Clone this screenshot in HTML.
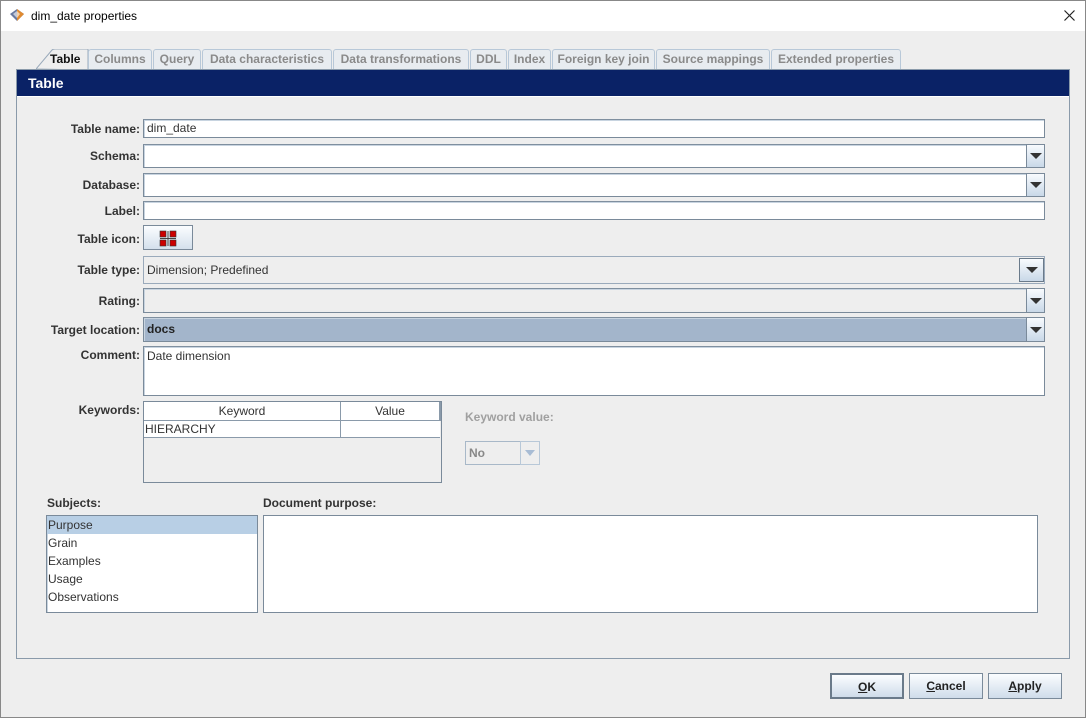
<!DOCTYPE html>
<html><head><meta charset="utf-8"><style>
*{box-sizing:border-box;margin:0;padding:0}
body{width:1086px;height:718px;background:#eeeeee;font-family:"Liberation Sans",Arial,sans-serif;font-size:12px;color:#333;position:relative;overflow:hidden}
.a{position:absolute}
.win{left:0;top:0;width:1086px;height:718px;border:1px solid #888}
.title{left:1px;top:1px;width:1084px;height:30px;background:#fff}
.tab{position:absolute;top:49px;height:20px;border:1px solid #b8c8d8;border-bottom:none;background:#e8ecf0;color:#8a8a8a;font-weight:bold;text-align:center;line-height:18px;border-radius:3px 3px 0 0}
.lbl{position:absolute;right:946px;font-weight:bold;color:#333;text-align:right;white-space:nowrap}
.inp{position:absolute;left:143px;width:902px;background:#fff;border:1px solid #7a8a9a;border-top-color:#7f8f9f;box-shadow:inset 1px 1px 0 #c8d4e0;padding-left:3px;white-space:nowrap}
.btn{position:absolute;background:linear-gradient(#f8fbfe,#c9d8e8);border:1px solid #7a8a9a}
.arr{position:absolute;left:50%;top:50%;margin-left:-6px;margin-top:-3px;width:0;height:0;border-left:6px solid transparent;border-right:6px solid transparent;border-top:6px solid #333}
.pb{position:absolute;top:673px;height:26px;width:74px;background:linear-gradient(#fbfdff,#cfdcea);border:1px solid #7a8a9a;font-weight:bold;font-size:12px;text-align:center;line-height:24px;color:#222}
</style></head><body>
<div class="a win"></div>
<div class="a title"></div>
<svg class="a" style="left:9px;top:8px" width="16" height="14" viewBox="0 0 16 14"><path d="M1 6 L8 1 L15 6 L8 13 Z" fill="#6a7aa0"/><path d="M8 1 L15 6 L8 13 Z" fill="#e08a30"/><path d="M4 6 L8 3 L11 6 L8 10Z" fill="#fff" opacity=".6"/></svg>
<div class="a" style="left:31px;top:9px;font-size:12px;color:#000">dim_date properties</div>
<svg class="a" style="left:1064px;top:10px" width="11" height="11"><path d="M0.5 0.5L10.5 10.5M10.5 0.5L0.5 10.5" stroke="#222" stroke-width="1.2"/></svg>

<svg class="a" style="left:36px;top:49px" width="54" height="21"><path d="M0 20 L16 1 Q17 0 19 0 L52 0 L52 21 Z" fill="#eeeeee" stroke="#9aaabb"/></svg>
<div class="a" style="left:50px;top:52px;font-weight:bold;color:#111">Table</div>
<div class="tab" style="left:88px;width:64px">Columns</div>
<div class="tab" style="left:153px;width:48px">Query</div>
<div class="tab" style="left:202px;width:130px">Data characteristics</div>
<div class="tab" style="left:333px;width:136px">Data transformations</div>
<div class="tab" style="left:470px;width:37px">DDL</div>
<div class="tab" style="left:508px;width:43px">Index</div>
<div class="tab" style="left:552px;width:103px">Foreign key join</div>
<div class="tab" style="left:656px;width:114px">Source mappings</div>
<div class="tab" style="left:771px;width:130px">Extended properties</div>

<div class="a" style="left:16px;top:69px;width:1054px;height:590px;border:1px solid #8a9aaa;background:#eeeeee"></div>
<div class="a" style="left:17px;top:70px;width:1052px;height:26px;background:#0a2266;color:#fff;font-weight:bold;font-size:14px;line-height:26px;padding-left:11px">Table</div>
<div class="a" style="left:17px;top:96px;width:1052px;height:1px;background:#fff"></div>

<div class="lbl" style="top:122px">Table name:</div>
<div class="inp" style="top:119px;height:19px;line-height:17px">dim_date</div>

<div class="lbl" style="top:149px">Schema:</div>
<div class="inp" style="top:144px;height:24px;width:884px"></div>
<div class="btn" style="left:1026px;top:144px;width:19px;height:24px"><div class="arr"></div></div>

<div class="lbl" style="top:178px">Database:</div>
<div class="inp" style="top:173px;height:24px;width:884px"></div>
<div class="btn" style="left:1026px;top:173px;width:19px;height:24px"><div class="arr"></div></div>

<div class="lbl" style="top:204px">Label:</div>
<div class="inp" style="top:201px;height:19px"></div>

<div class="lbl" style="top:232px">Table icon:</div>
<div class="btn" style="left:143px;top:225px;width:50px;height:25px;background:linear-gradient(#fbfdff,#d4e0ec)">
<svg class="a" style="left:15px;top:4px" width="18" height="17"><rect x="1" y="1" width="6" height="6" fill="#c00" stroke="#333" stroke-width=".6"/><rect x="11" y="1" width="6" height="6" fill="#c00" stroke="#333" stroke-width=".6"/><rect x="1" y="10" width="6" height="6" fill="#c00" stroke="#333" stroke-width=".6"/><rect x="11" y="10" width="6" height="6" fill="#c00" stroke="#333" stroke-width=".6"/><path d="M9 1V16M1 8.5H17" stroke="#444"/></svg></div>

<div class="lbl" style="top:263px">Table type:</div>
<div class="inp" style="top:256px;height:28px;line-height:26px;background:#eeeeee;box-shadow:none;border-color:#9aaabb">Dimension; Predefined</div>
<div class="btn" style="left:1019px;top:258px;width:25px;height:24px;border-color:#6a7a8a"><div class="arr"></div></div>

<div class="lbl" style="top:294px">Rating:</div>
<div class="inp" style="top:288px;height:25px;width:884px;background:#eeeeee"></div>
<div class="btn" style="left:1026px;top:288px;width:19px;height:25px"><div class="arr"></div></div>

<div class="lbl" style="top:323px">Target location:</div>
<div class="inp" style="top:317px;height:25px;width:884px;background:#a3b5cb;line-height:23px;font-weight:bold;color:#222">docs</div>
<div class="btn" style="left:1026px;top:317px;width:19px;height:25px"><div class="arr"></div></div>

<div class="lbl" style="top:348px">Comment:</div>
<div class="inp" style="top:346px;height:50px;padding-top:2px">Date dimension</div>

<div class="lbl" style="top:403px">Keywords:</div>
<div class="a" style="left:143px;top:401px;width:299px;height:82px;border:1px solid #7a8a9a;background:#eeeeee"></div>
<div class="a" style="left:144px;top:402px;width:197px;height:19px;border-right:1px solid #8a9aaa;border-bottom:1px solid #8a9aaa;background:#fff;text-align:center;line-height:19px">Keyword</div>
<div class="a" style="left:341px;top:402px;width:100px;height:19px;border-bottom:1px solid #8a9aaa;border-right:2px solid #8a9aaa;background:#fff;text-align:center;line-height:19px">Value</div>
<div class="a" style="left:144px;top:421px;width:197px;height:17px;border-right:1px solid #8a9aaa;border-bottom:1px solid #8a9aaa;background:#fff;line-height:16px;padding-left:1px">HIERARCHY</div>
<div class="a" style="left:341px;top:421px;width:99px;height:17px;border-bottom:1px solid #8a9aaa;background:#fff"></div>

<div class="a" style="left:465px;top:410px;font-weight:bold;color:#a0a0a0">Keyword value:</div>
<div class="a" style="left:465px;top:441px;width:56px;height:24px;border:1px solid #a8b8c8;background:#eeeeee;font-weight:bold;color:#888;line-height:22px;padding-left:3px">No</div>
<div class="a" style="left:520px;top:441px;width:20px;height:24px;border:1px solid #b8c8d8;background:#eeeeee"><div class="arr" style="border-top-color:#a8bcd4;border-left-width:5px;border-right-width:5px;margin-left:-5px"></div></div>

<div class="a" style="left:47px;top:496px;font-weight:bold">Subjects:</div>
<div class="a" style="left:263px;top:496px;font-weight:bold">Document purpose:</div>
<div class="a" style="left:46px;top:515px;width:212px;height:98px;border:1px solid #7a8a9a;background:#fff;box-shadow:inset 1px 1px 0 #c8d4e0;line-height:18px">
<div style="background:#b8cfe5;padding-left:1px">Purpose</div>
<div style="padding-left:1px">Grain</div>
<div style="padding-left:1px">Examples</div>
<div style="padding-left:1px">Usage</div>
<div style="padding-left:1px">Observations</div>
</div>
<div class="a" style="left:263px;top:515px;width:775px;height:98px;border:1px solid #7a8a9a;background:#fff"></div>

<div class="pb" style="left:830px;border:2px solid #6a7a8a"><u>O</u>K</div>
<div class="pb" style="left:909px"><u>C</u>ancel</div>
<div class="pb" style="left:988px"><u>A</u>pply</div>
</body></html>
